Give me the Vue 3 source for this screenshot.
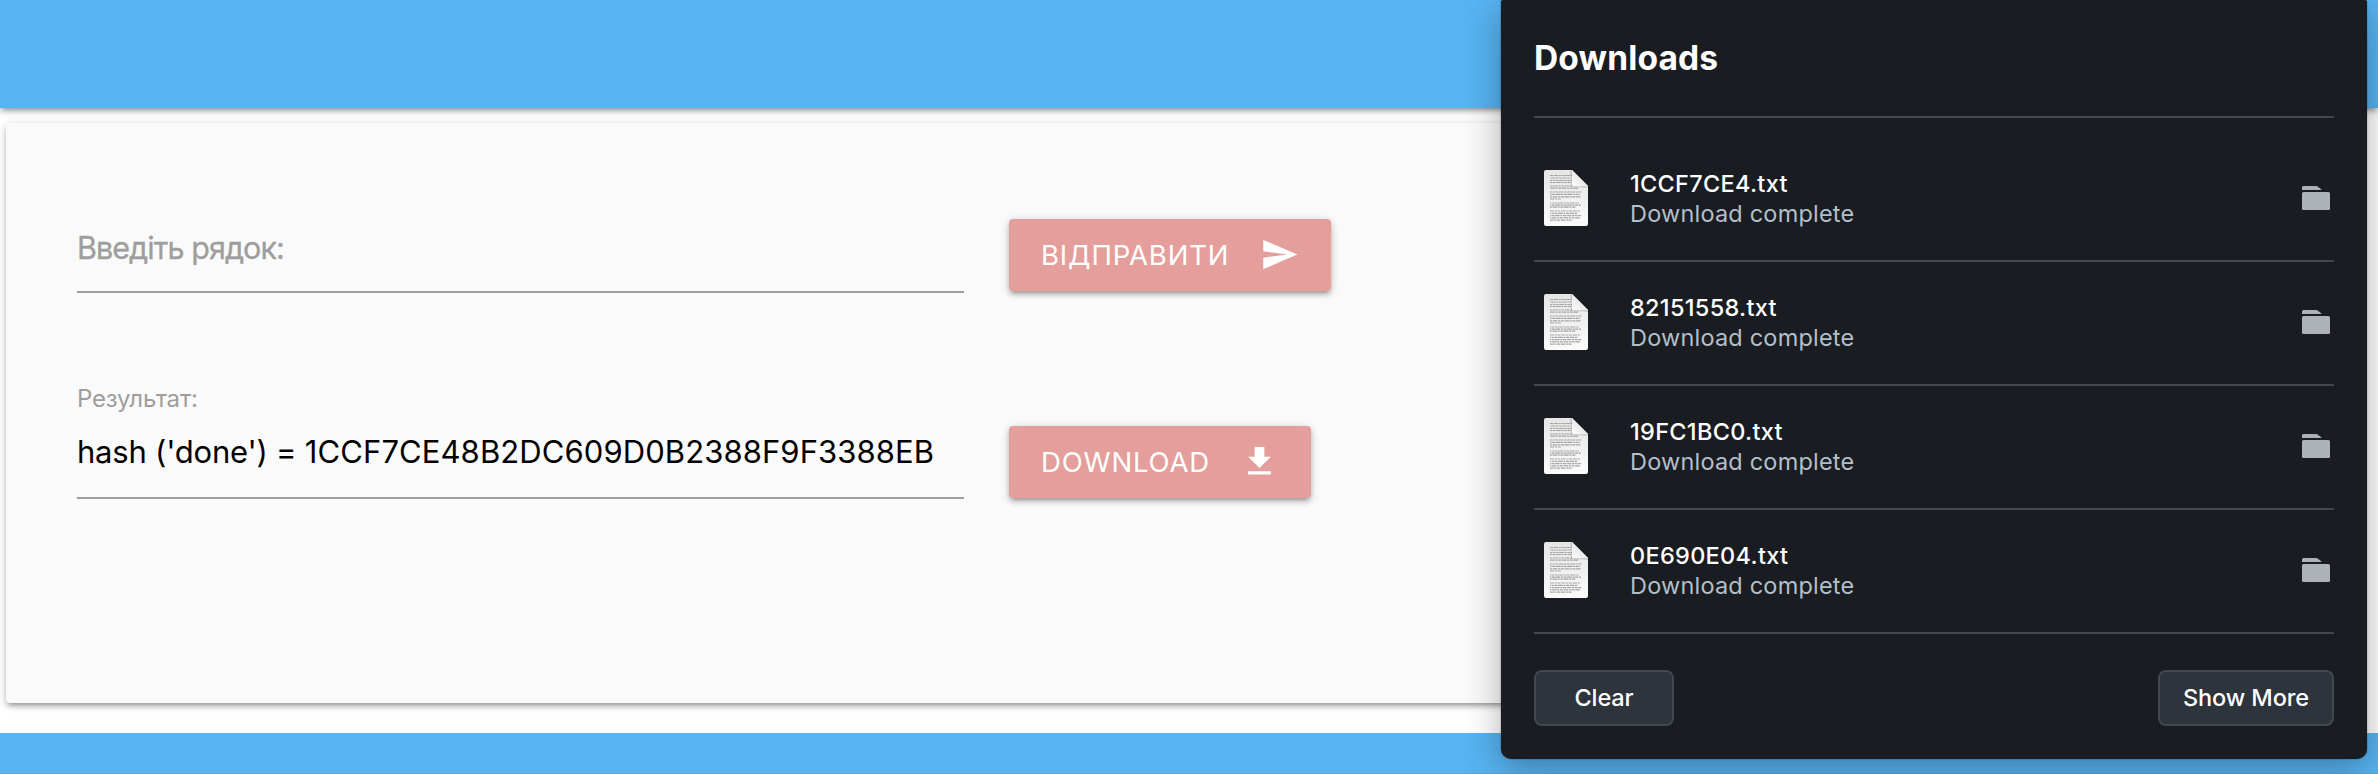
<script setup>
const files = ['1CCF7CE4.txt', '82151558.txt', '19FC1BC0.txt', '0E690E04.txt']
// [y, x start, x end] of every text line on the document icon
const docLines = [
  [5.5, 6, 28], [8, 6, 27], [10.5, 6, 28], [12.5, 6, 27],
  [16, 6, 28], [18.2, 6, 34],
  [22, 6, 38], [24.4, 6, 36], [26.8, 6, 37], [29, 6, 17],
  [33, 6, 35], [35.2, 6, 37], [37.2, 6, 32],
  [41, 6, 36], [43.3, 6, 34], [45.6, 6, 37], [47.9, 6, 36], [50.2, 6, 28],
]
</script>

<template>
  <div class="page">
    <header class="bar"></header>
    <main class="main">
      <section class="card">
        <div class="row">
          <div class="field"><span class="placeholder">Введіть рядок:</span></div>
          <button class="btn send">
            <span class="send-text">ВІДПРАВИТИ</span>
            <svg viewBox="0 0 24 24"><path d="M2.01 21L23 12 2.01 3 2 10l15 2-15 2z" /></svg>
          </button>
        </div>
        <div class="row second">
          <div class="field filled">
            <span class="label">Результат:</span>
            <span class="value">hash ('done') = <span class="digest">1CCF7CE48B2DC609D0B2388F9F3388EB</span></span>
          </div>
          <button class="btn download">
            <span class="download-text">DOWNLOAD</span>
            <svg viewBox="0 0 24 24"><path d="M19 9h-4V3H9v6H5l7 7 7-7zM5 18v2h14v-2H5z" /></svg>
          </button>
        </div>
      </section>
    </main>
    <footer class="foot"></footer>

    <aside class="panel">
      <h2>Downloads</h2>
      <ul>
        <li v-for="f in files" :key="f">
          <svg class="doc" viewBox="0 0 44 58">
            <defs>
              <linearGradient id="paper" x1="0" y1="0" x2="0" y2="1">
                <stop offset="0" stop-color="#e6e6e6" />
                <stop offset="1" stop-color="#fbfbfb" />
              </linearGradient>
              <linearGradient id="fold" x1="0" y1="1" x2="0.6" y2="0.4">
                <stop offset="0" stop-color="#ffffff" />
                <stop offset="1" stop-color="#e4e4e4" />
              </linearGradient>
            </defs>
            <path d="M2 0H28L44 16V54a2 2 0 0 1-2 2H2a2 2 0 0 1-2-2V2a2 2 0 0 1 2-2z" fill="url(#paper)" />
            <path
              v-for="(l, i) in docLines" :key="i" class="ink"
              :d="`M${l[1]} ${l[0]}H${l[2]}`" :stroke-dashoffset="i * 3"
            />
            <path d="M26 1L28 0V14L44 16V18L27 17z" fill="#000" opacity=".12" />
            <path d="M28 0V14a2 2 0 0 0 2 2H44z" fill="url(#fold)" />
          </svg>
          <div class="info">
            <span class="name">{{ f }}</span>
            <span class="status">Download complete</span>
          </div>
          <svg class="folder" viewBox="0 0 28 24">
            <path d="M0 4V1.5A1.5 1.5 0 0 1 1.5 0H14q1 0 2 .8L20 4z" />
            <rect y="6" width="28" height="18" rx="1.5" />
          </svg>
        </li>
      </ul>
      <div class="actions">
        <button class="clear">Clear</button>
        <button class="more">Show More</button>
      </div>
    </aside>
  </div>
</template>

<style>
body { background: #fff; overflow: hidden; }
</style>

<style scoped>
* { box-sizing: border-box; }
.page {
  position: relative;
  display: flex;
  flex-direction: column;
  width: 2378px;
  height: 774px;
  overflow: hidden;
  font-family: Inter, "Liberation Sans", sans-serif;
}
button { font-family: inherit; margin: 0; }
.bar, .card, .btn {
  box-shadow: 0 4px 4px 0 rgba(0,0,0,.14), 0 6px 2px -4px rgba(0,0,0,.12), 0 2px 10px 0 rgba(0,0,0,.2);
}
.bar { height: 108px; flex: none; background: #57b3f1; }
.main { height: 625px; flex: none; padding: 15px 28px 30px 6px; }
.card { height: 580px; border-radius: 4px; background: #fafafa; padding: 96px 71px 0; }
.row { display: flex; gap: 45px; height: 74px; }
.second { margin-top: 133px; }
.field {
  width: 887px;
  height: 74px;
  border-bottom: 2px solid #9e9e9e;
  display: flex;
  flex-direction: column;
  white-space: nowrap;
  color: #9e9e9e;
}
.placeholder { font-size: 30.5px; line-height: 40px; margin-top: 9px; letter-spacing: -.95px; -webkit-text-stroke: .3px #9e9e9e; }
.filled { height: 120px; margin-top: -47px; }
.label { font-size: 24px; line-height: 30px; margin-top: 5px; letter-spacing: -.2px; }
.value { font-size: 31px; line-height: 40px; margin-top: 18px; color: #000; letter-spacing: -.22px; }
.digest { letter-spacing: .09px; }
.btn {
  display: flex;
  justify-content: space-between;
  align-items: flex-start;
  height: 72px;
  padding: 16px 32px 0;
  border: 0;
  border-radius: 4px;
  background: #e49e9b;
  color: #fff;
  font-size: 27.5px;
  line-height: 40px;
  white-space: nowrap;
}
.btn svg { width: 39px; height: 39px; flex: none; fill: #fff; }
.send { width: 322px; }
.download { width: 302px; }
.send-text, .download-text { letter-spacing: .83px; }
.panel {
  position: absolute;
  left: 1501px;
  top: 0;
  width: 866px;
  height: 759px;
  padding: 0 33px;
  border-radius: 2px 2px 10px 10px;
  background: #191c20;
  box-shadow: 0 10px 36px rgba(0,0,0,.3), 0 0 2px rgba(0,0,0,.4);
  color: #fff;
}
h2 {
  margin: 0;
  height: 118px;
  padding-top: 36px;
  border-bottom: 2px solid #41484f;
  font-size: 33.5px;
  font-weight: 700;
  line-height: 44px;
  letter-spacing: .15px;
}
ul { list-style: none; margin: 0; padding: 20px 0 0; }
li {
  display: flex;
  align-items: flex-start;
  height: 124px;
  padding: 32px 4px 0 10px;
  border-bottom: 2px solid #41484f;
}
.doc { width: 44px; height: 58px; flex: none; overflow: visible; }
.ink { stroke: #a3a3a3; stroke-width: 1.2; stroke-dasharray: 3 .7 4.5 .7 2 .7; fill: none; }
.info { display: flex; flex-direction: column; margin: -1px 0 0 42px; font-size: 23.5px; line-height: 30px; flex: 1; }
.name { font-weight: 500; letter-spacing: .3px; }
.status { color: #b3bfcb; letter-spacing: .2px; }
.folder { width: 28px; height: 24px; margin-top: 16px; fill: #adb2b7; }
.actions { display: flex; justify-content: space-between; padding-top: 36px; }
.actions button {
  height: 56px;
  padding: 0 0 1px;
  border: 2px solid #41484f;
  border-radius: 8px;
  background: #2d343b;
  color: #fff;
  font-size: 23.5px;
  font-weight: 500;
  letter-spacing: -.1px;
}
.clear { width: 140px; }
.more { width: 176px; }
.foot { flex: 1; background: #57b3f1; border-bottom: 1px solid #55a7dd; }
</style>
